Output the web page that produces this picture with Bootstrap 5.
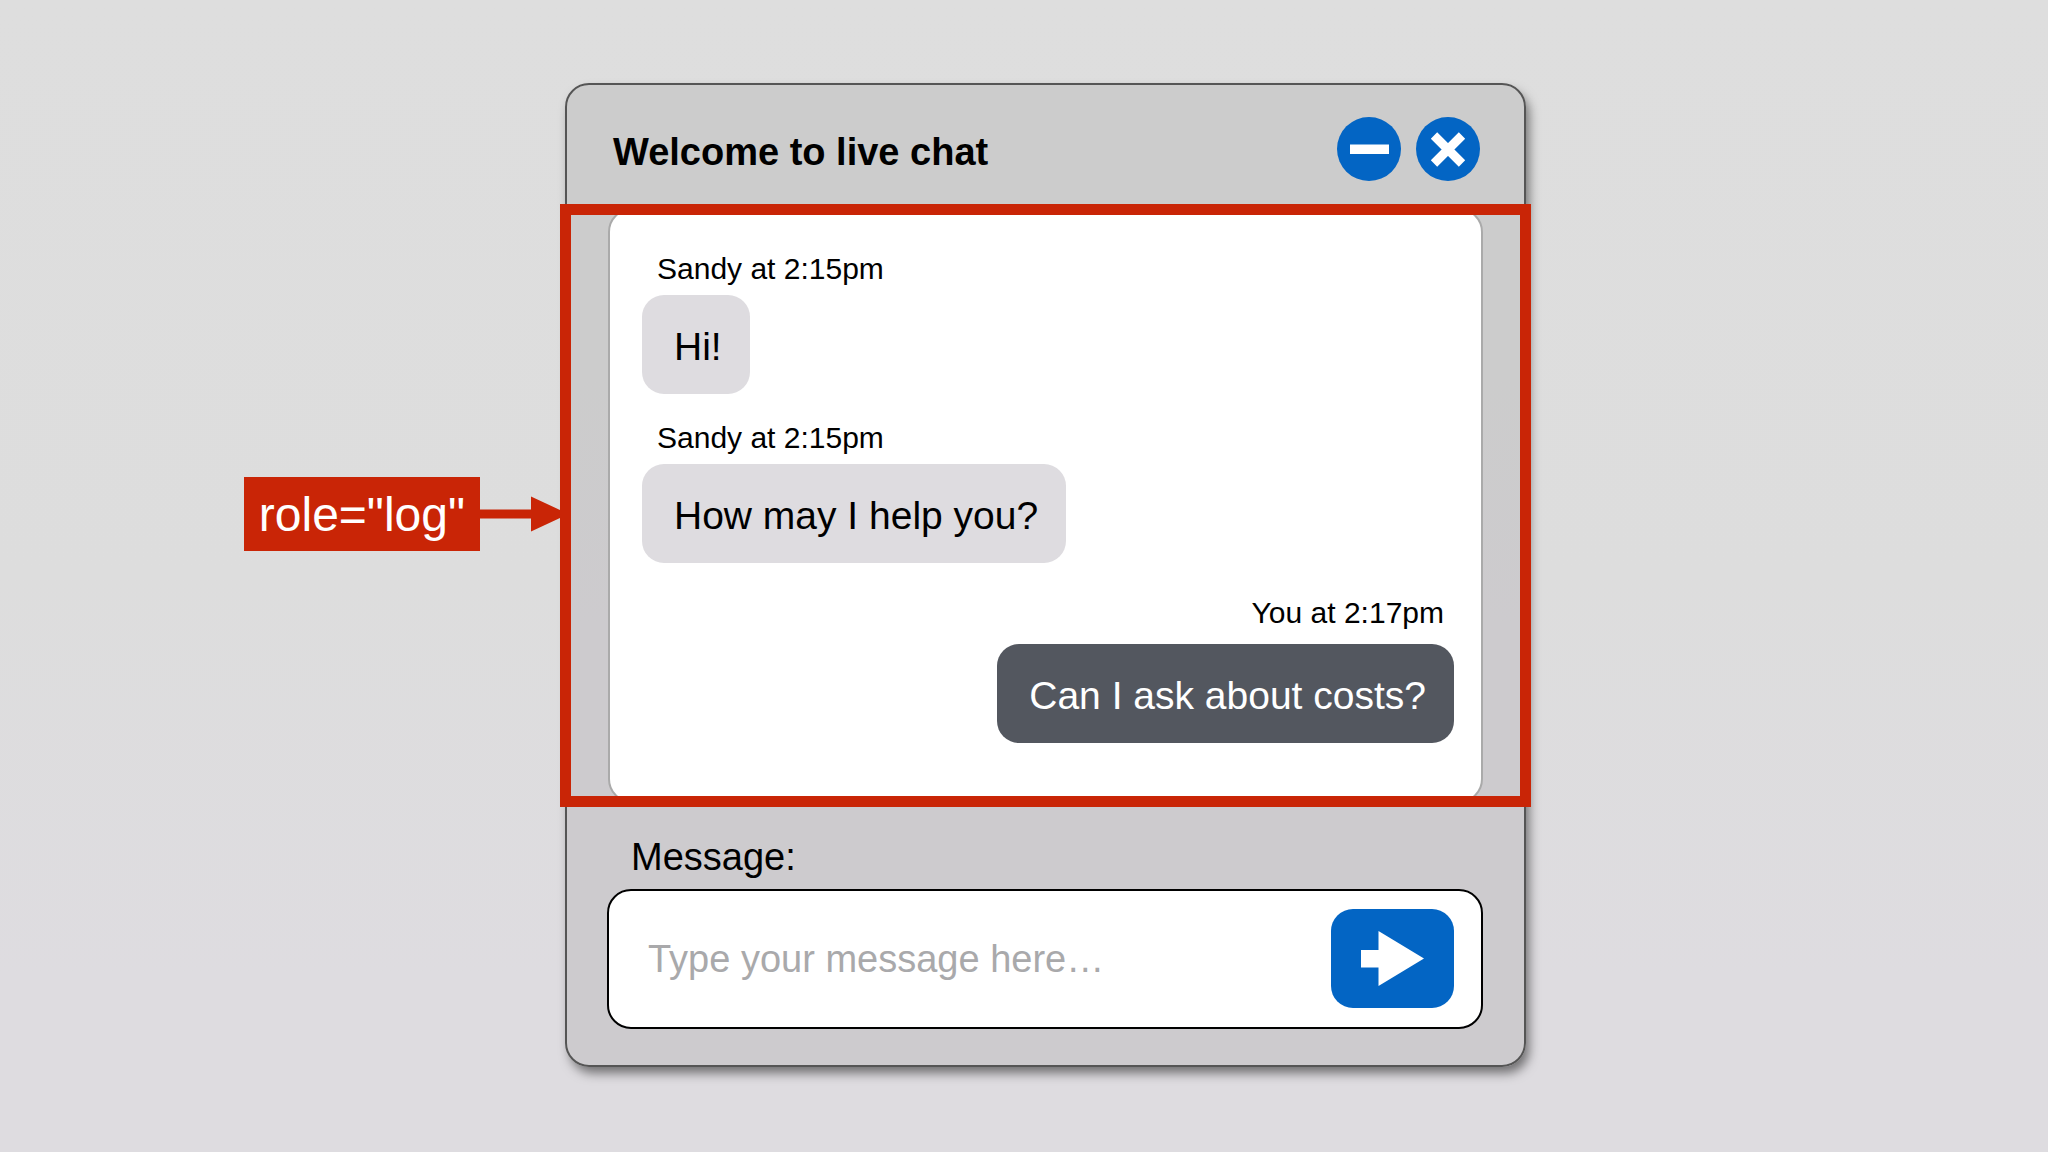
<!DOCTYPE html>
<html lang="en">
<head>
<meta charset="utf-8">
<meta name="viewport" content="width=device-width, initial-scale=1">
<title>Live chat</title>
<link href="https://cdn.jsdelivr.net/npm/bootstrap@5.3.0/dist/css/bootstrap.min.css" rel="stylesheet">
<style>
  :root { --signal: #c92506; --action: #0365c4; }
  body {
    font-family: "Liberation Sans", Arial, sans-serif;
    font-size: 38px;
    line-height: 48px;
    color: #000;
    background: linear-gradient(#dedede 0%, #dddddd 50%, #dedce0 85%) no-repeat #dedce0;
  }
  /* The chat window sits slightly right of centre to leave room for the callout. */
  .stage {
    display: grid;
    grid-template-columns: 565fr 961fr 522fr;
    padding: 83px 0;
  }
  .chat-window {
    grid-column: 2;
    background: linear-gradient(#cccccc 0%, #cccccc 30%, #cdcbce 55%);
    border: 2px solid #555;
    border-radius: 24px;
    box-shadow: 4px 7px 11px -1px rgba(0, 0, 0, .5);
  }
  .chat-head { padding: 32px 44px 23px 46px; }
  .chat-title { font-size: 38px; line-height: 48px; font-weight: 700; padding-top: 5px; }
  .round-btn { width: 64px; height: 64px; background: var(--action); }
  .head-actions { gap: 15px; }
  .log-area { margin: 0 -7px; }
  .log-frame { border: 11px solid var(--signal); overflow: hidden; }
  .log-panel {
    margin: -7px 37px;
    padding: 41px 27px 58px 32px;
    background: #fff;
    border: 2px solid #aaa;
    border-radius: 24px;
  }
  .entry { margin-bottom: 26px; }
  .entry-meta { font-size: 30px; line-height: 36px; padding: 0 15px 8px; }
  .bubble { font-size: 39px; padding: 28px 28px 23px 32px; border-radius: 22px; background: #dedce0; }
  .entry-own { margin: 32px 0 0; }
  .entry-own .entry-meta { padding: 0 10px 13px; }
  .entry-own .bubble { background: #53575f; color: #fff; }
  .callout { right: 100%; top: 273px; }
  .callout-tag { background: var(--signal); color: #fff; font-size: 48px; line-height: 56px; padding: 10px 15px 8px; }
  .chat-form { padding: 26px 41px 36px 40px; }
  .chat-form label { padding-left: 24px; margin-bottom: 8px; }
  .compose { border: 2px solid #000; border-radius: 24px; padding: 18px 27px 19px 39px; }
  .compose input { font-size: 38px; line-height: 48px; height: 60px; min-width: 0; padding: 2px 0 0; outline-offset: 6px; }
  .compose input::placeholder { color: #a9a9ab; opacity: 1; }
  .send-btn { width: 123px; height: 99px; border-radius: 22px; background: var(--action); }
</style>
</head>
<body>
<main class="stage">
  <section class="chat-window" aria-labelledby="chat-title">
    <header class="chat-head d-flex justify-content-between align-items-center">
      <h1 id="chat-title" class="chat-title m-0">Welcome to live chat</h1>
      <div class="head-actions d-flex">
        <button type="button" class="round-btn border-0 rounded-circle p-0 d-flex" aria-label="Minimise">
          <svg width="64" height="64" viewBox="0 0 64 64" aria-hidden="true"><path d="M13 27.500H52V37H13Z" fill="#fff"/></svg>
        </button>
        <button type="button" class="round-btn border-0 rounded-circle p-0 d-flex" aria-label="Close">
          <svg width="64" height="64" viewBox="0 0 64 64" aria-hidden="true"><path d="M18 18.500L46 46.500M46 18.500L18 46.500" stroke="#fff" stroke-width="9"/></svg>
        </button>
      </div>
    </header>

    <div class="log-area position-relative">
      <div class="callout position-absolute d-flex align-items-center">
        <div class="callout-tag text-nowrap">role="log"</div>
        <svg width="80" height="36" viewBox="0 0 80 36" class="flex-shrink-0" aria-hidden="true"><path d="M0 13.500H51V0.500L80 14V22L51 35.500V22.500H0Z" fill="#c92506"/></svg>
      </div>
      <div class="log-frame">
        <div class="log-panel" role="log">
          <div class="entry d-flex flex-column align-items-start">
            <div class="entry-meta">Sandy at 2:15pm</div>
            <div class="bubble">Hi!</div>
          </div>
          <div class="entry d-flex flex-column align-items-start">
            <div class="entry-meta">Sandy at 2:15pm</div>
            <div class="bubble">How may I help you?</div>
          </div>
          <div class="entry entry-own d-flex flex-column align-items-end">
            <div class="entry-meta">You at 2:17pm</div>
            <div class="bubble">Can I ask about costs?</div>
          </div>
        </div>
      </div>
    </div>

    <form class="chat-form">
      <label for="message" class="d-block">Message:</label>
      <div class="compose bg-white d-flex align-items-center">
        <input id="message" type="text" class="flex-grow-1 border-0 bg-transparent" placeholder="Type your message here…">
        <button type="button" class="send-btn border-0 p-0 flex-shrink-0 d-flex" aria-label="Send">
          <svg width="123" height="99" viewBox="0 0 123 99" aria-hidden="true"><path d="M30 41H47.500V22L93 49.500L47.500 77V58.500H30Z" fill="#fff"/></svg>
        </button>
      </div>
    </form>
  </section>
</main>
<script src="https://cdn.jsdelivr.net/npm/bootstrap@5.3.0/dist/js/bootstrap.bundle.min.js"></script>
</body>
</html>
